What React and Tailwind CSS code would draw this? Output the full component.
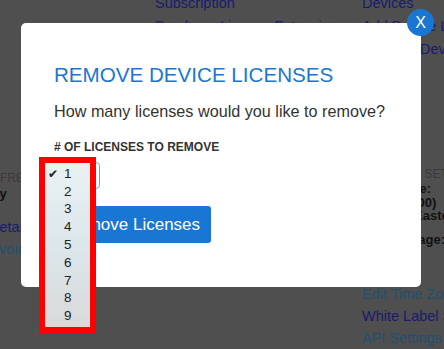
import React from "react";

const options = [1, 2, 3, 4, 5, 6, 7, 8, 9];

const App = () => {
  return (
    <div className="relative h-[349px] w-[444px] overflow-hidden bg-[#4f4f4f] font-['Liberation_Sans',Arial,sans-serif]">
      {/* page behind the dialog (already dimmed) */}
      <div className="-mt-[8px] flex whitespace-nowrap">
        <div className="w-[155px] shrink-0">
          <div className="mt-[178px] text-[12px] leading-[16px] uppercase text-[#3a3a3a]">
            Free Trial
          </div>
          <div className="-ml-[43px] text-[13px] leading-[16px] font-bold text-[#111]">
            Monthly
          </div>
          <div className="mt-[14px] -ml-[11px] text-[14.5px] leading-[22px] text-[#1a1a6e]">
            Details
          </div>
          <div className="-ml-[13px] text-[14.5px] leading-[22px] text-[#1f4f6f]">
            Invoices
          </div>
        </div>

        <div className="w-[207px] shrink-0 text-[14.5px] leading-[23px] text-[#1a1a6e]">
          <div>Subscription</div>
          <div>Purchase License Extension</div>
        </div>

        <div className="shrink-0">
          <div className="text-[14.5px] leading-[23px] text-[#1a1a6e]">
            <div>Devices</div>
            <div>Add Device Licenses</div>
            <div>Remove Device Licenses</div>
          </div>
          <div className="mt-[105px] text-[12px] leading-[16px] uppercase text-[#3a3a3a]">
            Account Settings
          </div>
          <div className="text-[13px] leading-[13.5px] font-bold text-[#111]">
            <div>Time Zone:</div>
            <div>(GMT-05:00)</div>
            <div>Default: Eastern Time</div>
            <div className="mt-[10.5px]">Default Page: Devices</div>
          </div>
          <div className="mt-[36.5px] text-[14.5px] leading-[22px]">
            <div className="text-[#1f4f6f]">Edit Time Zone</div>
            <div className="text-[#1a1a6e]">White Label Settings</div>
            <div className="text-[#1f4f6f]">API Settings</div>
          </div>
        </div>
      </div>

      {/* Dialog */}
      <div className="absolute left-[21px] top-[23px] h-[264px] w-[400px] rounded-[5px] bg-white px-[33px] pt-[40px]">
        <h2 className="text-[20.6px] leading-[24px] text-[#1976d2]">
          REMOVE DEVICE LICENSES
        </h2>
        <p className="mt-[14px] text-[16.2px] leading-[20px] text-[#333]">
          How many licenses would you like to remove?
        </p>
        <div className="mt-[18px] text-[12px] leading-[16px] font-bold text-[#333]">
          # OF LICENSES TO REMOVE
        </div>

        <div className="relative mt-[7px] h-[27px] w-[46px] rounded-[4px] border border-[#66a3e0] bg-white">
          {/* open native list */}
          <div className="absolute -left-[16px] -top-[6px] z-10 h-[176px] w-[57px] border-[6px] border-[#ff0000] bg-gradient-to-b from-[#e9f1f2] via-[#dce7ec] to-[#d9d9d9] pt-[2px]">
            {options.map((n) => (
              <div
                key={n}
                className="flex h-[17.8px] items-center text-[13.5px] text-[#222]"
              >
                <span className="w-[19px] pl-[3px] text-[12px] font-['DejaVu_Sans',sans-serif]">
                  {n === 1 ? "✔" : ""}
                </span>
                <span>{n}</span>
              </div>
            ))}
          </div>
        </div>

        <button className="mt-[17px] flex h-[37px] w-[157px] items-center justify-center rounded-[3px] bg-[#1976d2] text-[17px] text-white">
          Remove Licenses
        </button>
      </div>

      {/* close */}
      <button className="absolute left-[407px] top-[9px] flex h-[27px] w-[27px] items-center justify-center rounded-full bg-[#1976d2] text-[16px] text-white">
        X
      </button>
    </div>
  );
};

export default App;
